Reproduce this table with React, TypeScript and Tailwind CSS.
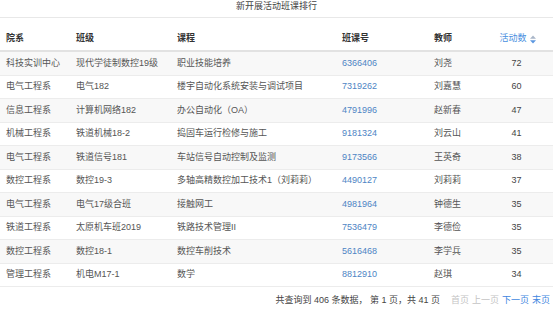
const ROWS = [
  ['科技实训中心', '现代学徒制数控19级', '职业技能培养', '6366406', '刘尧', 72],
  ['电气工程系', '电气182', '楼宇自动化系统安装与调试项目', '7319262', '刘嘉慧', 60],
  ['信息工程系', '计算机网络182', '办公自动化（OA）', '4791996', '赵新春', 47],
  ['机械工程系', '铁道机械18-2', '捣固车运行检修与施工', '9181324', '刘云山', 41],
  ['电气工程系', '铁道信号181', '车站信号自动控制及监测', '9173566', '王英奇', 38],
  ['数控工程系', '数控19-3', '多轴高精数控加工技术1（刘莉莉）', '4490127', '刘莉莉', 37],
  ['电气工程系', '电气17级合班', '接触网工', '4981964', '钟德生', 35],
  ['铁道工程系', '太原机车班2019', '铁路技术管理II', '7536479', '李德俭', 35],
  ['数控工程系', '数控18-1', '数控车削技术', '5616468', '李学兵', 35],
  ['管理工程系', '机电M17-1', '数学', '8812910', '赵琪', 34],
] as const;

const GRID = 'grid grid-cols-[76px_101px_165px_92px_46px_1fr] items-center';

const SortIcon = () => (
  <svg width="6" height="9" viewBox="0 0 6 9" className="ml-[3px]">
    <path d="M0 3.8 L3 0.5 L6 3.8 Z" fill="#a9b6c8" />
    <path d="M0 5.2 L3 8.5 L6 5.2 Z" fill="#5b97e0" />
  </svg>
);

export default function App() {
  return (
    <div className="w-[553px] h-[312px] bg-white text-[9px] text-[#555] font-['Liberation_Sans','Noto_Sans_CJK_SC',sans-serif] overflow-hidden">
      <div className="h-[18px] leading-[13px] text-center text-[#444] border-b border-[#e8e8e8]">
        新开展活动班课排行
      </div>

      <div className={`${GRID} mt-[10px] h-[24px] border-b-2 border-[#e2e2e2] font-bold text-[#333]`}>
        <div className="pl-[6px]">院系</div>
        <div>班级</div>
        <div>课程</div>
        <div>班课号</div>
        <div>教师</div>
        <div className="flex items-center justify-center pl-[2px] font-normal text-[#4a8fe0]">
          活动数 <SortIcon />
        </div>
      </div>

      {ROWS.map((r, i) => (
        <div
          key={i}
          className={`${GRID} h-[23.5px] border-b border-[#ececec] ${i % 2 === 0 ? 'bg-[#f8f8f8]' : 'bg-white'}`}
        >
          <div className="pl-[6px]">{r[0]}</div>
          <div>{r[1]}</div>
          <div>{r[2]}</div>
          <div className="text-[#4d84c4]">{r[3]}</div>
          <div>{r[4]}</div>
          <div className="text-center text-[#444]">{r[5]}</div>
        </div>
      ))}

      <div className="flex justify-end items-center h-[28px] pr-[3px] text-[#444]">
        <span className="whitespace-pre">共查询到 406 条数据， 第 1 页，共 41 页</span>
        <div className="flex gap-[3px] ml-[11px]">
          <span className="text-[#c4c4c4]">首页</span>
          <span className="text-[#c4c4c4]">上一页</span>
          <span className="text-[#3f86e0]">下一页</span>
          <span className="text-[#3f86e0]">末页</span>
        </div>
      </div>
    </div>
  );
}
